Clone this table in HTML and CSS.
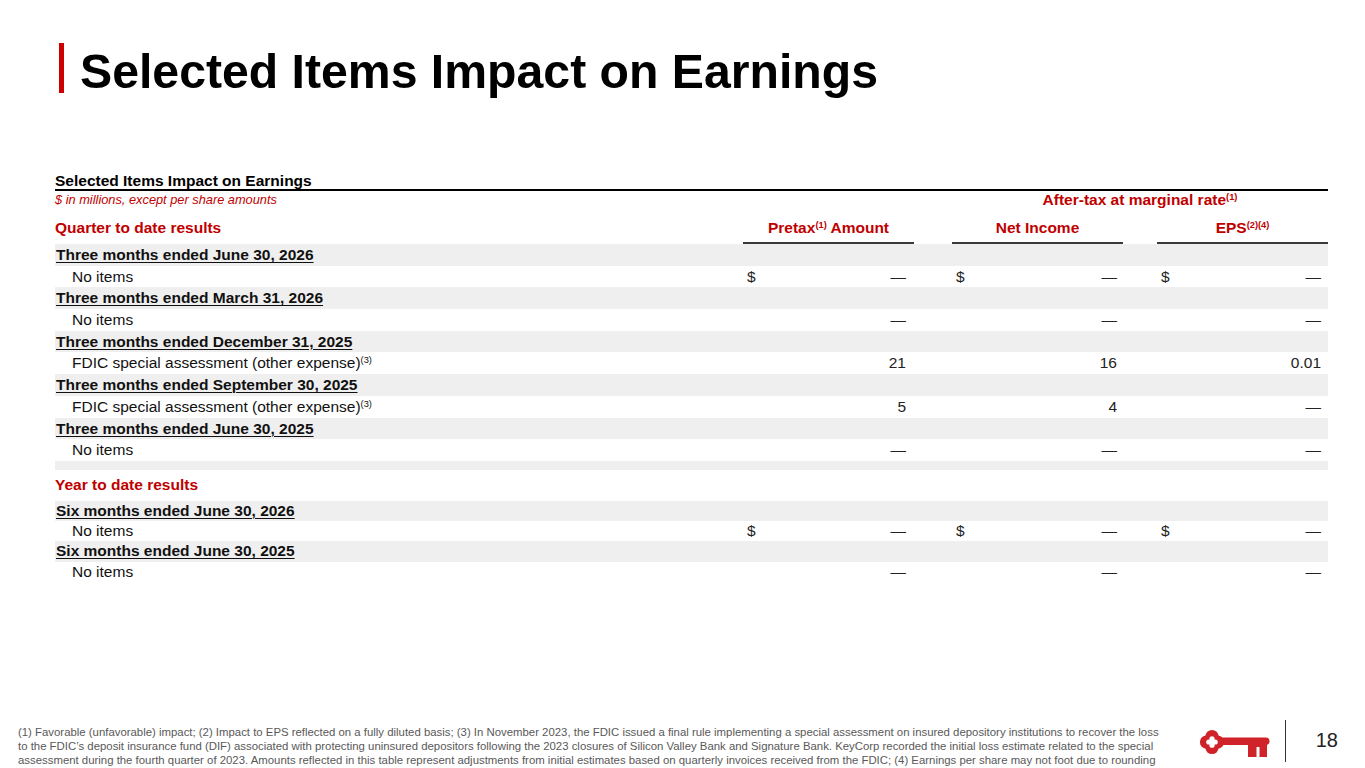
FILE: index.html
```html
<!DOCTYPE html>
<html lang="en">
<head>
<meta charset="utf-8">
<title>Selected Items Impact on Earnings</title>
<link rel="stylesheet" href="styles.css">
</head>
<body>
<div class="slide">
  <header class="title">
    <div class="title-bar"></div>
    <h1>Selected Items Impact on Earnings</h1>
  </header>

  <section class="tbl">
    <div class="tbl-title">Selected Items Impact on Earnings</div>
    <div class="row sub">
      <div class="units">$ in millions, except per share amounts</div>
      <div class="aftertax">After-tax at marginal rate<sup>(1)</sup></div>
    </div>
    <div class="row head">
      <div class="grp">Quarter to date results</div>
      <div class="colh">Pretax<sup>(1)</sup> Amount</div>
      <div></div>
      <div class="colh">Net Income</div>
      <div></div>
      <div class="colh">EPS<sup>(2)(4)</sup></div>
    </div>

    <div class="row sec q"><div class="lbl">Three months ended June 30, 2026</div></div>
    <div class="row item q">
      <div class="lbl">No items</div>
      <div class="v p"><span>$</span><span>—</span></div><div></div>
      <div class="v n"><span>$</span><span>—</span></div><div></div>
      <div class="v e"><span>$</span><span>—</span></div>
    </div>
    <div class="row sec q"><div class="lbl">Three months ended March 31, 2026</div></div>
    <div class="row item q">
      <div class="lbl">No items</div>
      <div class="v p"><span></span><span>—</span></div><div></div>
      <div class="v n"><span></span><span>—</span></div><div></div>
      <div class="v e"><span></span><span>—</span></div>
    </div>
    <div class="row sec q"><div class="lbl">Three months ended December 31, 2025</div></div>
    <div class="row item q">
      <div class="lbl">FDIC special assessment (other expense)<sup>(3)</sup></div>
      <div class="v p"><span></span><span>21</span></div><div></div>
      <div class="v n"><span></span><span>16</span></div><div></div>
      <div class="v e"><span></span><span>0.01</span></div>
    </div>
    <div class="row sec q"><div class="lbl">Three months ended September 30, 2025</div></div>
    <div class="row item q">
      <div class="lbl">FDIC special assessment (other expense)<sup>(3)</sup></div>
      <div class="v p"><span></span><span>5</span></div><div></div>
      <div class="v n"><span></span><span>4</span></div><div></div>
      <div class="v e"><span></span><span>—</span></div>
    </div>
    <div class="row sec q"><div class="lbl">Three months ended June 30, 2025</div></div>
    <div class="row item q">
      <div class="lbl">No items</div>
      <div class="v p"><span></span><span>—</span></div><div></div>
      <div class="v n"><span></span><span>—</span></div><div></div>
      <div class="v e"><span></span><span>—</span></div>
    </div>

    <div class="spacer"></div>
    <div class="row ytd"><div class="grp">Year to date results</div></div>

    <div class="row sec y"><div class="lbl">Six months ended June 30, 2026</div></div>
    <div class="row item y">
      <div class="lbl">No items</div>
      <div class="v p"><span>$</span><span>—</span></div><div></div>
      <div class="v n"><span>$</span><span>—</span></div><div></div>
      <div class="v e"><span>$</span><span>—</span></div>
    </div>
    <div class="row sec y"><div class="lbl">Six months ended June 30, 2025</div></div>
    <div class="row item y">
      <div class="lbl">No items</div>
      <div class="v p"><span></span><span>—</span></div><div></div>
      <div class="v n"><span></span><span>—</span></div><div></div>
      <div class="v e"><span></span><span>—</span></div>
    </div>
  </section>

  <footer class="footer">
    <p class="notes">(1) Favorable (unfavorable) impact; (2) Impact to EPS reflected on a fully diluted basis; (3) In November 2023, the FDIC issued a final rule implementing a special assessment on insured depository institutions to recover the loss<br>to the FDIC’s deposit insurance fund (DIF) associated with protecting uninsured depositors following the 2023 closures of Silicon Valley Bank and Signature Bank. KeyCorp recorded the initial loss estimate related to the special<br>assessment during the fourth quarter of 2023. Amounts reflected in this table represent adjustments from initial estimates based on quarterly invoices received from the FDIC; (4) Earnings per share may not foot due to rounding</p>
    <div class="brand">
      <svg class="key" width="72" height="32" viewBox="0 0 72 32" aria-label="Key logo">
        <g fill="#cf2229">
          <circle cx="14" cy="9.5" r="6.6"/>
          <circle cx="14" cy="20.5" r="6.6"/>
          <circle cx="8.5" cy="15" r="6.6"/>
          <circle cx="19.5" cy="15" r="6.6"/>
          <circle cx="14" cy="15" r="9"/>
          <rect x="22" y="10.5" width="49.5" height="7.5" rx="3.75"/>
          <rect x="50" y="16" width="8.5" height="14"/>
          <rect x="61.5" y="16" width="7.5" height="14"/>
          <rect x="58" y="16" width="4" height="4"/>
        </g>
        <g fill="#fff">
          <circle cx="14" cy="11.8" r="2.6"/>
          <circle cx="14" cy="18.2" r="2.6"/>
          <circle cx="10.8" cy="15" r="2.6"/>
          <circle cx="17.2" cy="15" r="2.6"/>
          <rect x="11.6" y="12.6" width="4.8" height="4.8"/>
        </g>
      </svg>
      <div class="divider"></div>
      <div class="pageno">18</div>
    </div>
  </footer>
</div>
</body>
</html>
```

FILE: styles.css
```css
* {
  box-sizing: border-box;
  margin: 0;
  padding: 0;
}

body {
  margin: 0;
  width: 1365px;
  height: 768px;
  overflow: hidden;
  background: #ffffff;
  font-family: "Liberation Sans", Arial, sans-serif;
  color: #111111;
}

.slide {
  display: flex;
  flex-direction: column;
  height: 768px;
}

/* Title */
.title {
  display: flex;
  align-items: flex-start;
  gap: 16px;
  margin-top: 43px;
  padding-left: 59px;
}

.title-bar {
  width: 5px;
  height: 50px;
  background: #cc0000;
}

.title h1 {
  font-size: 48.2px;
  line-height: 50px;
  padding-top: 3px;
  font-weight: bold;
  color: #000000;
}

/* Table */
.tbl {
  margin: 76px 0 0 55px;
  width: 1273px;
  font-size: 15.5px;
}

.tbl-title {
  font-weight: bold;
  line-height: 17px;
  height: 19px;
  border-bottom: 2px solid #000000;
  color: #000000;
}

.row {
  display: grid;
  grid-template-columns: 688px 171px 38px 171px 34px 171px;
}

.sub {
  height: 18px;
  line-height: 18px;
}

.units {
  font-size: 12.8px;
  font-style: italic;
  color: #c00000;
}

.aftertax {
  grid-column: 4 / 7;
  text-align: center;
  font-weight: bold;
  color: #c00000;
}

.head {
  height: 35px;
  align-items: end;
}

.grp {
  font-weight: bold;
  color: #c00000;
  line-height: 18px;
}

.head .grp {
  padding-bottom: 7px;
}

.colh {
  font-weight: bold;
  color: #c00000;
  text-align: center;
  line-height: 18px;
  padding-bottom: 5px;
  border-bottom: 2px solid #3a3a3a;
}

sup {
  font-size: 0.6em;
  line-height: 0;
  vertical-align: 0.5em;
}

.q {
  height: 21.7px;
  line-height: 21.7px;
}

.y {
  height: 20.25px;
  line-height: 20.25px;
}

.sec {
  background: #efefef;
}

.sec .lbl {
  font-weight: bold;
  text-decoration: underline;
  text-decoration-thickness: 1px;
  text-underline-offset: 2px;
  color: #111111;
  padding-left: 1px;
}

.item .lbl {
  padding-left: 17px;
  color: #111111;
}

.v {
  display: flex;
  justify-content: space-between;
  padding-left: 4px;
  color: #222222;
}

.v.p { padding-right: 8px; }
.v.n { padding-right: 6px; }
.v.e { padding-right: 7px; }

.spacer {
  height: 9px;
  background: #efefef;
}

.ytd {
  height: 31px;
  align-items: center;
}

/* Footer */
.footer {
  margin-top: auto;
  height: 48px;
  display: flex;
  align-items: flex-start;
  padding-left: 18px;
}

.notes {
  flex: none;
  margin-top: 5px;
  font-size: 11.38px;
  line-height: 14px;
  color: #595959;
  white-space: nowrap;
}

.brand {
  margin-left: auto;
  display: flex;
  align-items: flex-start;
  padding-right: 27px;
}

.key {
  display: block;
  margin-top: 7px;
}

.divider {
  width: 1px;
  height: 42px;
  background: #333333;
  margin-left: 15px;
}

.pageno {
  margin-left: 30px;
  margin-top: 10px;
  font-size: 20px;
  line-height: 20px;
  color: #222222;
}
```
